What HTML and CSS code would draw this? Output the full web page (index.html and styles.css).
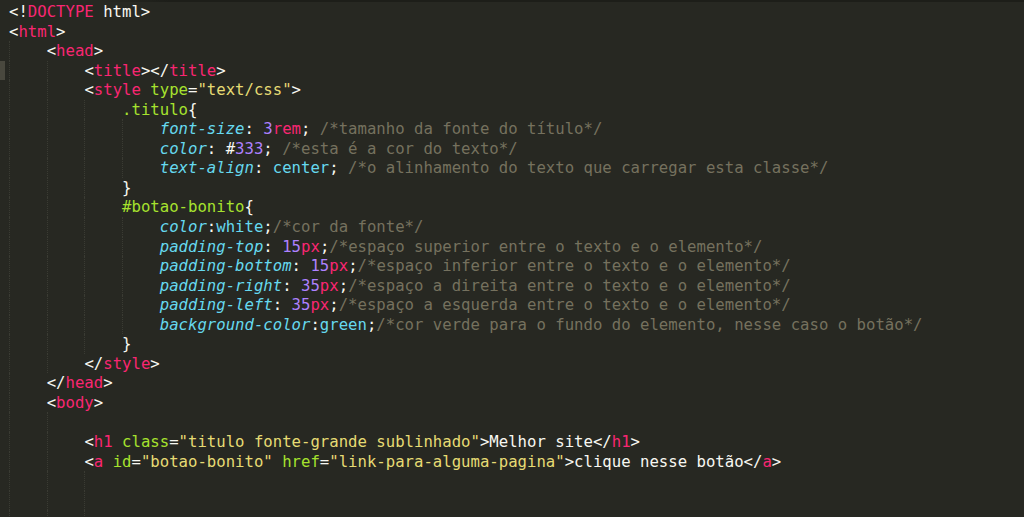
FILE: index.html
```html
<!DOCTYPE html>
<html>
<head>
<meta charset="utf-8">
<title>editor</title>
<link rel="stylesheet" href="styles.css">
</head>
<body>
<div class="editor">
  <div class="line"><span class="gut"></span><span class="code"><span class="p">&lt;!</span><span class="t">DOCTYPE</span><span class="p"> html&gt;</span></span></div>
  <div class="line"><span class="gut"></span><span class="code"><span class="p">&lt;</span><span class="t">html</span><span class="p">&gt;</span></span></div>
  <div class="line"><span class="gut"></span><span class="g"></span><span class="code"><span class="p">&lt;</span><span class="t">head</span><span class="p">&gt;</span></span></div>
  <div class="line"><span class="gut on"></span><span class="g"></span><span class="g"></span><span class="code"><span class="p">&lt;</span><span class="t">title</span><span class="p">&gt;&lt;/</span><span class="t">title</span><span class="p">&gt;</span></span></div>
  <div class="line"><span class="gut"></span><span class="g"></span><span class="g"></span><span class="code"><span class="p">&lt;</span><span class="t">style</span> <span class="a">type</span><span class="p">=</span><span class="s">"text/css"</span><span class="p">&gt;</span></span></div>
  <div class="line"><span class="gut"></span><span class="g"></span><span class="g"></span><span class="g"></span><span class="code"><span class="a">.titulo</span><span class="p">{</span></span></div>
  <div class="line"><span class="gut"></span><span class="g"></span><span class="g"></span><span class="g"></span><span class="g"></span><span class="code"><span class="k">font-size</span><span class="p">: </span><span class="n">3</span><span class="u">rem</span><span class="p">;</span> <span class="c">/*tamanho da fonte do título*/</span></span></div>
  <div class="line"><span class="gut"></span><span class="g"></span><span class="g"></span><span class="g"></span><span class="g"></span><span class="code"><span class="k">color</span><span class="p">: #</span><span class="n">333</span><span class="p">;</span> <span class="c">/*esta é a cor do texto*/</span></span></div>
  <div class="line"><span class="gut"></span><span class="g"></span><span class="g"></span><span class="g"></span><span class="g"></span><span class="code"><span class="k">text-align</span><span class="p">: </span><span class="v">center</span><span class="p">;</span> <span class="c">/*o alinhamento do texto que carregar esta classe*/</span></span></div>
  <div class="line"><span class="gut"></span><span class="g"></span><span class="g"></span><span class="g"></span><span class="code"><span class="p">}</span></span></div>
  <div class="line"><span class="gut"></span><span class="g"></span><span class="g"></span><span class="g"></span><span class="code"><span class="a">#botao-bonito</span><span class="p">{</span></span></div>
  <div class="line"><span class="gut"></span><span class="g"></span><span class="g"></span><span class="g"></span><span class="g"></span><span class="code"><span class="k">color</span><span class="p">:</span><span class="v">white</span><span class="p">;</span><span class="c">/*cor da fonte*/</span></span></div>
  <div class="line"><span class="gut"></span><span class="g"></span><span class="g"></span><span class="g"></span><span class="g"></span><span class="code"><span class="k">padding-top</span><span class="p">: </span><span class="n">15</span><span class="u">px</span><span class="p">;</span><span class="c">/*espaço superior entre o texto e o elemento*/</span></span></div>
  <div class="line"><span class="gut"></span><span class="g"></span><span class="g"></span><span class="g"></span><span class="g"></span><span class="code"><span class="k">padding-bottom</span><span class="p">: </span><span class="n">15</span><span class="u">px</span><span class="p">;</span><span class="c">/*espaço inferior entre o texto e o elemento*/</span></span></div>
  <div class="line"><span class="gut"></span><span class="g"></span><span class="g"></span><span class="g"></span><span class="g"></span><span class="code"><span class="k">padding-right</span><span class="p">: </span><span class="n">35</span><span class="u">px</span><span class="p">;</span><span class="c">/*espaço a direita entre o texto e o elemento*/</span></span></div>
  <div class="line"><span class="gut"></span><span class="g"></span><span class="g"></span><span class="g"></span><span class="g"></span><span class="code"><span class="k">padding-left</span><span class="p">: </span><span class="n">35</span><span class="u">px</span><span class="p">;</span><span class="c">/*espaço a esquerda entre o texto e o elemento*/</span></span></div>
  <div class="line"><span class="gut"></span><span class="g"></span><span class="g"></span><span class="g"></span><span class="g"></span><span class="code"><span class="k">background-color</span><span class="p">:</span><span class="v">green</span><span class="p">;</span><span class="c">/*cor verde para o fundo do elemento, nesse caso o botão*/</span></span></div>
  <div class="line"><span class="gut"></span><span class="g"></span><span class="g"></span><span class="g"></span><span class="code"><span class="p">}</span></span></div>
  <div class="line"><span class="gut"></span><span class="g"></span><span class="g"></span><span class="code"><span class="p">&lt;/</span><span class="t">style</span><span class="p">&gt;</span></span></div>
  <div class="line"><span class="gut"></span><span class="g"></span><span class="code"><span class="p">&lt;/</span><span class="t">head</span><span class="p">&gt;</span></span></div>
  <div class="line"><span class="gut"></span><span class="g"></span><span class="code"><span class="p">&lt;</span><span class="t">body</span><span class="p">&gt;</span></span></div>
  <div class="line"><span class="gut"></span><span class="g"></span><span class="g"></span><span class="code"></span></div>
  <div class="line"><span class="gut"></span><span class="g"></span><span class="g"></span><span class="code"><span class="p">&lt;</span><span class="t">h1</span> <span class="a">class</span><span class="p">=</span><span class="s">"titulo fonte-grande sublinhado"</span><span class="p">&gt;Melhor site&lt;/</span><span class="t">h1</span><span class="p">&gt;</span></span></div>
  <div class="line"><span class="gut"></span><span class="g"></span><span class="g"></span><span class="code"><span class="p">&lt;</span><span class="t">a</span> <span class="a">id</span><span class="p">=</span><span class="s">"botao-bonito"</span> <span class="a">href</span><span class="p">=</span><span class="s">"link-para-alguma-pagina"</span><span class="p">&gt;clique nesse botão&lt;/</span><span class="t">a</span><span class="p">&gt;</span></span></div>
  <div class="line"><span class="gut"></span><span class="g"></span><span class="g"></span><span class="g"></span><span class="code"></span></div>
  <div class="line"><span class="gut"></span><span class="g"></span><span class="g"></span><span class="g"></span><span class="code"></span></div>
  <div class="line"><span class="gut"></span><span class="g"></span><span class="g"></span><span class="g"></span><span class="code"></span></div>
</div>
</body>
</html>
```

FILE: styles.css
```css
html, body {
  margin: 0;
  padding: 0;
  background: #272822;
  height: 100%;
  overflow: hidden;
}

.editor {
  height: 517px;
  box-sizing: border-box;
  padding-top: 2px;
  background:
    linear-gradient(to right, rgba(24, 25, 20, 0) 100px, #1d1e19 170px) top left / 100% 2px no-repeat,
    #272822;
  font-family: "DejaVu Sans Mono", monospace;
  font-size: 15.65px;
  color: #f8f8f2;
}

.line {
  display: flex;
  height: 19.56px;
  align-items: stretch;
}

.gut {
  flex: 0 0 9px;
}

.gut.on {
  box-shadow: inset 5px 0 0 #49483e;
}

.g {
  flex: 0 0 37.7px;
  box-sizing: border-box;
  border-left: 1px dotted #3a3b33;
}

.code {
  white-space: pre;
  line-height: 19.56px;
}

.p { color: #f8f8f2; }
.t { color: #f92672; }
.a { color: #a6e22e; }
.s { color: #e6db74; }
.c { color: #75715e; }
.k { color: #66d9ef; font-style: italic; }
.v { color: #66d9ef; }
.n { color: #ae81ff; }
.u { color: #f92672; }
```
